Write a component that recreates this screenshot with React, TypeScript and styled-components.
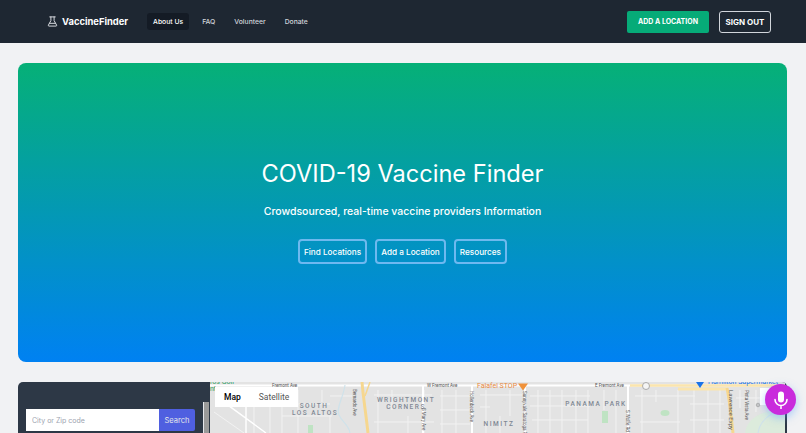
import React from 'react';
import styled, { createGlobalStyle } from 'styled-components';

const GlobalStyle = createGlobalStyle`
  html, body {
    margin: 0;
    height: 100%;
    overflow: hidden;
    background: #f1f2f4;
    font-family: Inter, "Liberation Sans", sans-serif;
  }
`;

const navLinks = ['About Us', 'FAQ', 'Volunteer', 'Donate'];
const heroLinks = ['Find Locations', 'Add a Location', 'Resources'];

const FlaskIcon = () => (
  <svg width="11" height="11" viewBox="0 0 24 24" fill="none" stroke="#e5e7eb" strokeWidth="2" strokeLinecap="round" strokeLinejoin="round">
    <path d="M6 2h12M8.500 2v8L3 20a1.500 1.500 0 0 0 1.300 2h15.400a1.500 1.500 0 0 0 1.300-2l-5.500-10V2M6 16h12" />
  </svg>
);

const MicIcon = () => (
  <svg width="16" height="18" viewBox="0 0 16 18" fill="none" stroke="#ffffff" strokeWidth="1.600" strokeLinecap="round">
    <rect x="5" y="0.500" width="6" height="11" rx="3" fill="#ffffff" stroke="none" />
    <path d="M2 8.500a6 6 0 0 0 12 0M8 14.500v3" />
  </svg>
);

const MapDrawing = () => (
  <MapSvg viewBox="0 0 575 51" preserveAspectRatio="none">
    <rect width="575" height="51" fill="#e3e3e3" />
    <path d="M535 51c2-14 14-22 40-24v24z" fill="#dcebdc" />
    <path d="M98 43h5v8h-5zM392 29h6v12h-6z" fill="#bfe3c3" />
    <ellipse cx="455" cy="31" rx="4.500" ry="3" fill="#bfe3c3" />
    <g stroke="#f2f2f2" strokeWidth="1" fill="none">
      <path d="M36 12h52M60 22h60M72 34h50M120 14h22M164 13h58M164 40h60M230 14h30M230 28h30M230 42h30M270 13h44M270 25h10M320 14h60M320 24h60M322 38h56M425 14h60M430 40h40M480 22h34M480 38h34M526 16h30" />
      <path d="M44 12v39M60 8v43M72 12v39M88 8v43M112 8v12M120 34v17M168 8v43M182 8v20M198 34v17M214 8v43M232 8v43M246 8v43M276 8v43M290 34v17M300 8v26M328 8v43M340 8v43M352 8v43M366 8v43M378 8v43M394 8v20M406 8v43M432 8v43M446 8v12M468 8v43M484 8v43M498 8v43M510 8v43M530 8v18M546 8v22" />
      <path d="M20 24l36 27M4 30l30 21" />
    </g>
    <g stroke="#ffffff" strokeWidth="2" fill="none">
      <path d="M0 3.500h575M262 3v48M315 3v48M418 3v48M213 3v48" />
      <path d="M36 6v45M8 16l48 35" strokeWidth="1.400" />
    </g>
    <path d="M135 3c-2 14-9 22-6 30 3 7 10 10 11 18" stroke="#cfe2ea" strokeWidth="1.200" fill="none" />
    <path d="M548 51c2-12 10-20 27-24" stroke="#cfe2ea" strokeWidth="1.200" fill="none" />
    <path d="M152 0c1 14 4 32 6 51" stroke="#f6d78f" strokeWidth="3" fill="none" />
    <path d="M160 0l-5 14" stroke="#f6d78f" strokeWidth="1.500" fill="none" />
    <path d="M420 3.500h155" stroke="#fbe5ad" strokeWidth="2.500" fill="none" />
    <path d="M468 7h50" stroke="#fbe5ad" strokeWidth="3" fill="none" />
    <path d="M517 6c3 14 4 28 6 45" stroke="#f6d78f" strokeWidth="3" fill="none" />
    <path d="M308 1.500h10l-5 7z" fill="#f0923a" />
    <path d="M486 0h8l-4 6z" fill="#1a73e8" />
    <circle cx="436" cy="4" r="3.500" fill="#f5f5f5" stroke="#9a9a9a" strokeWidth="0.800" />
    <circle cx="548" cy="23" r="1.800" fill="#c4c4c4" stroke="#8f8f8f" strokeWidth="0.500" />
    <rect x="550" y="6" width="15" height="17" fill="#ffffff" />
    <MapText x="104" y="26">SOUTH</MapText>
    <MapText x="105" y="33">LOS ALTOS</MapText>
    <MapText x="196" y="20">WRIGHTMONT</MapText>
    <MapText x="196" y="27">CORNERS</MapText>
    <MapText x="386" y="24">PANAMA PARK</MapText>
    <MapText x="289" y="44">NIMITZ</MapText>
    <RoadText x="62" y="5">Fremont Ave</RoadText>
    <RoadText x="217" y="5">W Fremont Ave</RoadText>
    <RoadText x="385" y="5">E Fremont Ave</RoadText>
    <RoadText x="143" y="7" transform="rotate(90 143 7)">Bernardo Ave</RoadText>
    <RoadText x="212" y="26" transform="rotate(90 212 26)">S Mary Ave</RoadText>
    <RoadText x="260" y="9" transform="rotate(90 260 9)">Hollenbeck Ave</RoadText>
    <RoadText x="313" y="9" transform="rotate(90 313 9)">Sunnyvale Saratoga Rd</RoadText>
    <RoadText x="416" y="28" transform="rotate(90 416 28)">S Wolfe Rd</RoadText>
    <RoadText x="535" y="8" transform="rotate(90 535 8)">Pista Vista Ave</RoadText>
    <RoadText x="519" y="8" transform="rotate(90 519 8)" $strong>Lawrence Expy</RoadText>
    <PlaceText x="267" y="6" fill="#e8893f">Falafel STOP</PlaceText>
    <PlaceText x="498" y="2" fill="#1a73e8">Hamilton Supermarket</PlaceText>
    <PlaceText x="0" y="2" fill="#2f9e63">ros Golf</PlaceText>
    <PlaceText x="0" y="9" fill="#2f9e63">nt</PlaceText>
  </MapSvg>
);

export default function App() {
  return (
    <>
      <GlobalStyle />
      <Header>
        <HeaderLeft>
          <Brand>
            <FlaskIcon />
            VaccineFinder
          </Brand>
          <Nav>
            {navLinks.map((label, i) => (
              <NavLink key={label} $active={i === 0}>{label}</NavLink>
            ))}
          </Nav>
        </HeaderLeft>
        <HeaderRight>
          <AddButton>ADD A LOCATION</AddButton>
          <SignOutButton>SIGN OUT</SignOutButton>
        </HeaderRight>
      </Header>
      <Main>
        <Hero>
          <HeroTitle>COVID-19 Vaccine Finder</HeroTitle>
          <HeroSubtitle>Crowdsourced, real-time vaccine providers Information</HeroSubtitle>
          <HeroActions>
            {heroLinks.map((label) => (
              <HeroButton key={label}>{label}</HeroButton>
            ))}
          </HeroActions>
        </Hero>
        <FinderPanel>
          <SearchColumn>
            <SearchForm>
              <SearchInput placeholder="City or Zip code" />
              <SearchButton>Search</SearchButton>
            </SearchForm>
            <ListScrollbar />
          </SearchColumn>
          <MapArea>
            <MapDrawing />
            <MapTypeControl>
              <MapTypeButton $active>Map</MapTypeButton>
              <MapTypeButton>Satellite</MapTypeButton>
            </MapTypeControl>
          </MapArea>
        </FinderPanel>
      </Main>
      <MicButton aria-label="Voice search">
        <MicIcon />
      </MicButton>
    </>
  );
}

const Header = styled.header`
  height: 43px;
  box-sizing: border-box;
  padding: 0 35px 0 47px;
  background: #1e2732;
  display: flex;
  align-items: center;
  justify-content: space-between;
`;

const HeaderLeft = styled.div`
  display: flex;
  align-items: center;
  gap: 19px;
`;

const Brand = styled.div`
  display: flex;
  align-items: center;
  gap: 4px;
  color: #ffffff;
  font-size: 9.400px;
  font-weight: 700;
`;

const Nav = styled.nav`
  display: flex;
  align-items: center;
  gap: 7px;
`;

const NavLink = styled.a<{ $active?: boolean }>`
  padding: 4px 6px;
  border-radius: 3px;
  font-size: 6.800px;
  font-weight: 500;
  line-height: 9px;
  color: ${(p) => (p.$active ? '#ffffff' : '#d1d5db')};
  background: ${(p) => (p.$active ? '#141b25' : 'transparent')};
`;

const HeaderRight = styled.div`
  display: flex;
  align-items: center;
  gap: 10px;
`;

const AddButton = styled.button`
  width: 82px;
  height: 22px;
  padding: 0;
  border: none;
  border-radius: 2px;
  background: #06ab78;
  color: #ffffff;
  font-family: inherit;
  font-size: 7px;
  font-weight: 700;
`;

const SignOutButton = styled.button`
  width: 52px;
  height: 22px;
  padding: 0;
  border: 1.500px solid #d1d5db;
  border-radius: 3px;
  background: transparent;
  color: #ffffff;
  font-family: inherit;
  font-size: 8px;
  font-weight: 700;
`;

const Main = styled.main`
  padding: 20px 19px 0 18px;
  display: flex;
  flex-direction: column;
  gap: 20px;
`;

const Hero = styled.section`
  height: 299px;
  border-radius: 8px;
  background: linear-gradient(180deg, #06b077 0%, #0081f2 100%);
  color: #ffffff;
  display: flex;
  flex-direction: column;
  align-items: center;
  padding-top: 96px;
  box-sizing: border-box;
`;

const HeroTitle = styled.h1`
  margin: 0;
  font-size: 23.600px;
  font-weight: 400;
  line-height: 30px;
`;

const HeroSubtitle = styled.p`
  margin: 15px 0 0;
  font-size: 10.500px;
  font-weight: 500;
  line-height: 16px;
`;

const HeroActions = styled.div`
  margin-top: 19px;
  display: flex;
  gap: 8px;
`;

const HeroButton = styled.button`
  height: 25px;
  padding: 0 4px;
  border: 2px solid rgba(147, 197, 253, 0.75);
  border-radius: 4px;
  background: transparent;
  color: #ffffff;
  font-family: inherit;
  font-size: 8.200px;
  font-weight: 500;
`;

const FinderPanel = styled.section`
  display: flex;
  height: 51px;
  padding-right: 2px;
  background: #2d3846;
  border-radius: 5px 5px 0 0;
  overflow: hidden;
`;

const SearchColumn = styled.div`
  width: 192px;
  flex-shrink: 0;
  padding-left: 8px;
  box-sizing: border-box;
  display: flex;
`;

const SearchForm = styled.div`
  width: 169px;
  height: 22px;
  margin-top: 27px;
  display: flex;
`;

const ListScrollbar = styled.div`
  width: 6px;
  margin: 20px 0 0 8px;
  box-sizing: border-box;
  border-left: 1.500px solid #e5e7eb;
  background: #9a9a9a;
`;

const SearchInput = styled.input`
  flex: 1;
  min-width: 0;
  box-sizing: border-box;
  padding: 0 6px;
  border: none;
  outline: none;
  background: #ffffff;
  font-family: inherit;
  font-size: 7px;

  &::placeholder {
    color: #9ca3af;
  }
`;

const SearchButton = styled.button`
  width: 36px;
  padding: 0;
  border: none;
  border-radius: 0 2px 2px 0;
  background: #4f5fe0;
  color: #e5e7eb;
  font-family: inherit;
  font-size: 7.500px;
`;

const MapArea = styled.div`
  position: relative;
  flex: 1;
  min-width: 0;
`;

const MapSvg = styled.svg`
  display: block;
  width: 100%;
  height: 100%;
`;

const MapText = styled.text`
  font-family: Roboto, sans-serif;
  font-size: 6.500px;
  font-weight: 500;
  fill: #7f8894;
  letter-spacing: 1.500px;
  text-anchor: middle;
`;

const RoadText = styled.text<{ $strong?: boolean }>`
  font-family: Roboto, sans-serif;
  font-size: ${(p) => (p.$strong ? '6px' : '4.500px')};
  fill: #555555;
`;

const PlaceText = styled.text`
  font-family: Roboto, sans-serif;
  font-size: 7px;
`;

const MapTypeControl = styled.div`
  position: absolute;
  top: 5px;
  left: 5px;
  height: 20px;
  display: flex;
  background: #ffffff;
`;

const MapTypeButton = styled.div<{ $active?: boolean }>`
  padding: 0 9px;
  display: flex;
  align-items: center;
  font-family: Roboto, sans-serif;
  font-size: 8.500px;
  font-weight: ${(p) => (p.$active ? 500 : 400)};
  color: ${(p) => (p.$active ? '#000000' : '#565656')};
`;

const MicButton = styled.button`
  position: fixed;
  top: 384px;
  left: 765px;
  width: 31px;
  height: 31px;
  padding: 0;
  border: none;
  border-radius: 50%;
  background: #c92bdc;
  box-shadow: 0 3px 8px rgba(96, 165, 250, 0.5);
  display: flex;
  align-items: center;
  justify-content: center;
`;
